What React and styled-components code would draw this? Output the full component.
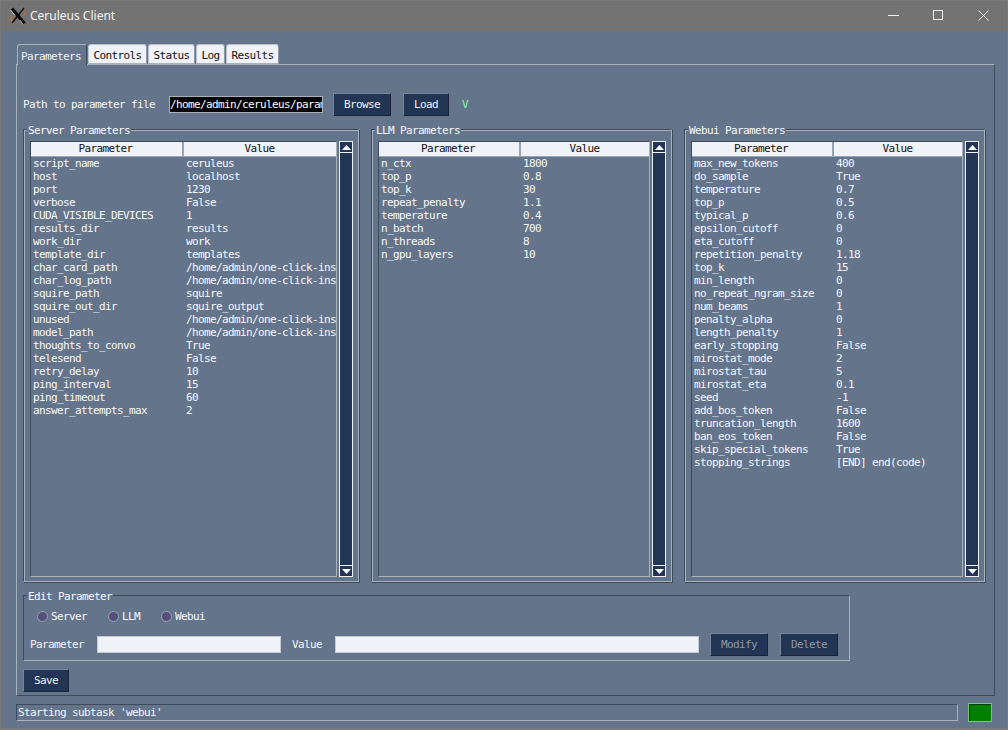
import React from "react";
import styled, { createGlobalStyle } from "styled-components";

const Global = createGlobalStyle`
  html, body { margin: 0; padding: 0; background: #64748b; }
  * { box-sizing: border-box; }
`;

const LIGHT = "#a8b2bf";
const DARK = "#3c4a5c";
const PALE = "#eff2f7";
const NAVY = "#233554";

const Win = styled.div`
  width: 1008px; height: 730px; background: #64748b; overflow: hidden;
  display: flex; flex-direction: column;
  border: solid #7a7a7a; border-width: 1px 1px 2px 1px;
  font-family: "DejaVu Sans Mono", "Liberation Mono", monospace;
  font-size: 11px; letter-spacing: -0.62px; color: #f6f8fb;
`;
const TitleBar = styled.div`
  height: 30px; flex: none; background: #737373; display: flex; align-items: center;
  padding-left: 8px;
`;
const TitleText = styled.span`
  font-family: "Noto Sans", "Open Sans", sans-serif; font-size: 12px; letter-spacing: 0;
  color: #f2f2f2; margin: -2px 0 0 3px;
`;
const WinBtns = styled.div`margin-left: auto; display: flex; height: 100%; margin-right: 1px; margin-top: -1px;`;
const WinBtn = styled.div`
  width: 45px; height: 100%; display: flex; align-items: center; justify-content: center;
`;
const Content = styled.div`
  flex: 1; display: flex; flex-direction: column; padding: 13px 12px 0 15px;
`;
const Tabs = styled.div`display: flex; height: 20px; padding-left: 1px; gap: 1px; position: relative; z-index: 1;`;
const Tab = styled.div`
  height: ${p => (p.$active ? "21px" : "20px")};
  width: ${p => p.$w}px;
  display: flex; align-items: center; justify-content: center;
  padding: 2px ${p => (p.$active ? "2px" : "0")} 0 0;
  background: ${p => (p.$active ? "#64748b" : PALE)};
  color: ${p => (p.$active ? PALE : "#111")};
  border: 1px solid ${p => (p.$active ? LIGHT : "#b9c2cd")};
  border-bottom: ${p => (p.$active ? "none" : `1px solid ${LIGHT}`)};
  border-right-color: ${p => (p.$active ? DARK : "#8f9aa8")};
  border-radius: 3px 3px 0 0;
`;
const Notebook = styled.div`
  height: 632px; flex: none;
  border: 1px solid; border-color: ${LIGHT} ${DARK} ${DARK} ${LIGHT};
  padding: 27px 9px 0 6px;
  display: flex; flex-direction: column;
`;
const PathRow = styled.div`display: flex; align-items: center; height: 24px;`;
const Label = styled.span`white-space: nowrap; width: ${p => p.$w}px; flex: none; margin-left: ${p => p.$ml || 0}px;`;
const PathEntry = styled.div`
  width: 154px; height: 17px; background: #000; color: #fff; overflow: hidden;
  white-space: nowrap; border: 1px solid ${LIGHT}; line-height: 15px;
`;
const Btn = styled.div`
  width: ${p => p.$w}px; height: 23px; flex: none; background: ${NAVY};
  color: ${p => (p.$disabled ? "#8d99a9" : PALE)};
  display: flex; align-items: center; justify-content: center;
  border: 1px solid; border-color: #76859a #1a2438 #1a2438 #76859a;
  margin-left: ${p => p.$ml || 0}px;
`;
const Check = styled.span`color: #86efac; margin-left: 13px;`;
const Panels = styled.div`
  display: grid; grid-template-columns: 336px 301px 301px; column-gap: 12px; margin-top: 13px; height: 453px;
`;
const Frame = styled.div`
  position: relative; height: 100%;
  border: 1px solid; border-color: ${DARK} ${LIGHT} ${LIGHT} ${DARK};
  box-shadow: inset 1px 1px 0 ${LIGHT}, 1px 1px 0 ${DARK};
  padding: 11px 5px 4px 6px;
`;
const Legend = styled.span`
  position: absolute; top: -6px; left: 3px; background: #64748b; padding: 0 1px; line-height: 13px;
`;
const TreeWrap = styled.div`display: flex; height: 100%; gap: 2px;`;
const Tree = styled.div`
  flex: 1; min-width: 0; overflow: hidden;
  border: 1px solid; border-color: ${DARK} ${LIGHT} ${LIGHT} ${DARK};
`;
const HeadRow = styled.div`
  display: grid; grid-template-columns: ${p => p.$c}; height: 15px; color: #111;
`;
const HeadCell = styled.div`
  background: ${PALE}; text-align: center; line-height: 14px; padding-right: 2px;
  border-right: 2px solid #9aa5b2; border-bottom: 1px solid #9aa5b2;
  &:last-child { border-right: none; margin-right: 1px; }
`;
const Row = styled.div`
  display: grid; grid-template-columns: ${p => p.$c}; height: 13px; line-height: 13px;
`;
const Cell = styled.div`
  margin-left: 2px; margin-right: 1px; white-space: nowrap; overflow: hidden;
`;
const Scroll = styled.div`
  width: 14px; flex: none; background: ${NAVY}; display: flex; flex-direction: column;
  justify-content: space-between; border: 1px solid ${PALE};
`;
const Arrow = styled.div`
  height: 11px; background: ${NAVY}; display: flex; align-items: center; justify-content: center;
  border-${p => (p.$down ? "top" : "bottom")}: 1px solid ${PALE};
`;
const EditFrame = styled(Frame)`
  width: 827px; margin-top: 13px; height: 66px; padding: 0; flex: none;
  box-shadow: none; display: flex; flex-direction: column;
`;
const Radios = styled.div`display: flex; height: 20px; margin-top: 10px; padding-left: 13px; align-items: center;`;
const Radio = styled.div`display: flex; align-items: center; gap: 3px; width: ${p => p.$w}px;`;
const Dot = styled.span`
  width: 11px; height: 11px; border-radius: 50%; background: #554f7c;
  border: 1px solid #9aa3b2; flex: none;
`;
const EditRow = styled.div`display: flex; align-items: center; margin-top: 7px; padding-left: 6px;`;
const Entry = styled.div`
  width: ${p => p.$w}px; height: 17px; background: ${PALE}; border: 1px solid #c5ccd6; flex: none;
`;
const SaveRow = styled.div`margin-top: 8px;`;
const StatusRow = styled.div`display: flex; margin-top: 7px; align-items: center;`;
const StatusBar = styled.div`
  width: 942px; height: 17px; line-height: 15px; border: 1px solid; padding-left: 1px;
  border-color: ${DARK} ${LIGHT} ${LIGHT} ${DARK};
`;
const Led = styled.div`
  width: 24px; height: 19px; background: #008000; margin-left: 10px;
  border: 1px solid; border-color: #7cc47c; box-shadow: inset 1px 1px 0 #0b3d0b;
`;

const server = [["script_name","ceruleus"],["host","localhost"],["port","1230"],["verbose","False"],["CUDA_VISIBLE_DEVICES","1"],["results_dir","results"],["work_dir","work"],["template_dir","templates"],["char_card_path","/home/admin/one-click-installers"],["char_log_path","/home/admin/one-click-installers"],["squire_path","squire"],["squire_out_dir","squire_output"],["unused","/home/admin/one-click-installers"],["model_path","/home/admin/one-click-installers"],["thoughts_to_convo","True"],["telesend","False"],["retry_delay","10"],["ping_interval","15"],["ping_timeout","60"],["answer_attempts_max","2"]];
const llm = [["n_ctx","1800"],["top_p","0.8"],["top_k","30"],["repeat_penalty","1.1"],["temperature","0.4"],["n_batch","700"],["n_threads","8"],["n_gpu_layers","10"]];
const webui = [["max_new_tokens","400"],["do_sample","True"],["temperature","0.7"],["top_p","0.5"],["typical_p","0.6"],["epsilon_cutoff","0"],["eta_cutoff","0"],["repetition_penalty","1.18"],["top_k","15"],["min_length","0"],["no_repeat_ngram_size","0"],["num_beams","1"],["penalty_alpha","0"],["length_penalty","1"],["early_stopping","False"],["mirostat_mode","2"],["mirostat_tau","5"],["mirostat_eta","0.1"],["seed","-1"],["add_bos_token","False"],["truncation_length","1600"],["ban_eos_token","False"],["skip_special_tokens","True"],["stopping_strings","[END] end(code)"]];

const Up = () => <svg width="9" height="5" viewBox="0 0 9 5"><path d="M4.5 0 9 5H0z" fill="#fff"/></svg>;
const Down = () => <svg width="9" height="5" viewBox="0 0 9 5"><path d="M0 0h9L4.5 5z" fill="#fff"/></svg>;

const Panel = ({ title, rows, cols }) => (
  <Frame>
    <Legend>{title}</Legend>
    <TreeWrap>
      <Tree>
        <HeadRow $c={cols}><HeadCell>Parameter</HeadCell><HeadCell>Value</HeadCell></HeadRow>
        {rows.map(([k, v]) => (
          <Row key={k} $c={cols}><Cell>{k}</Cell><Cell>{v}</Cell></Row>
        ))}
      </Tree>
      <Scroll>
        <Arrow><Up /></Arrow>
        <Arrow $down><Down /></Arrow>
      </Scroll>
    </TreeWrap>
  </Frame>
);

const Logo = () => (
  <svg width="18" height="18" viewBox="0 0 18 18">
    <path d="M3 9c-2 3-1 6 2 7.500" stroke="#d0702c" strokeWidth="1.5" fill="none"/>
    <path d="M12 2.500c3 1 4 3.500 3 6" stroke="#d0702c" strokeWidth="1" fill="none"/>
    <path d="M3 1.500 15.500 16.500" stroke="#0c0c0c" strokeWidth="3.200"/>
    <path d="M15 1 3 16" stroke="#0c0c0c" strokeWidth="1.500"/>
    <path d="M1.500 3l4 5M11 13l3 4.500" stroke="#e8e8e8" strokeWidth="0.700"/>
  </svg>
);

export default function App() {
  return (
    <Win>
      <Global />
      <TitleBar>
        <Logo />
        <TitleText>Ceruleus Client</TitleText>
        <WinBtns>
          <WinBtn><svg width="11" height="11" viewBox="0 0 11 11"><path d="M0 5.500h11" stroke="#eee"/></svg></WinBtn>
          <WinBtn><svg width="11" height="11" viewBox="0 0 11 11"><rect x=".5" y=".5" width="9" height="9" fill="none" stroke="#eee"/></svg></WinBtn>
          <WinBtn><svg width="11" height="11" viewBox="0 0 11 11"><path d="M.5.5l10 10M10.500.5l-10 10" stroke="#eee"/></svg></WinBtn>
        </WinBtns>
      </TitleBar>
      <Content>
        <Tabs>
          <Tab $active $w={70}>Parameters</Tab>
          <Tab $w={59}>Controls</Tab>
          <Tab $w={47}>Status</Tab>
          <Tab $w={29}>Log</Tab>
          <Tab $w={53}>Results</Tab>
        </Tabs>
        <Notebook>
          <PathRow>
            <Label $w={146}>Path to parameter file</Label>
            <PathEntry>/home/admin/ceruleus/parameters</PathEntry>
            <Btn $w={58} $ml={10}>Browse</Btn>
            <Btn $w={46} $ml={12}>Load</Btn>
            <Check>V</Check>
          </PathRow>
          <Panels>
            <Panel title="Server Parameters" rows={server} cols="153px 154px" />
            <Panel title="LLM Parameters" rows={llm} cols="142px 130px" />
            <Panel title="Webui Parameters" rows={webui} cols="142px 130px" />
          </Panels>
          <EditFrame>
            <Legend>Edit Parameter</Legend>
            <Radios>
              <Radio $w={71}><Dot />Server</Radio>
              <Radio $w={53}><Dot />LLM</Radio>
              <Radio $w={60}><Dot />Webui</Radio>
            </Radios>
            <EditRow>
              <Label $w={67}>Parameter</Label>
              <Entry $w={184} />
              <Label $w={43} $ml={11}>Value</Label>
              <Entry $w={364} />
              <Btn $w={58} $ml={11} $disabled>Modify</Btn>
              <Btn $w={58} $ml={12} $disabled>Delete</Btn>
            </EditRow>
          </EditFrame>
          <SaveRow><Btn $w={46}>Save</Btn></SaveRow>
        </Notebook>
        <StatusRow>
          <StatusBar>Starting subtask 'webui'</StatusBar>
          <Led />
        </StatusRow>
      </Content>
    </Win>
  );
}
